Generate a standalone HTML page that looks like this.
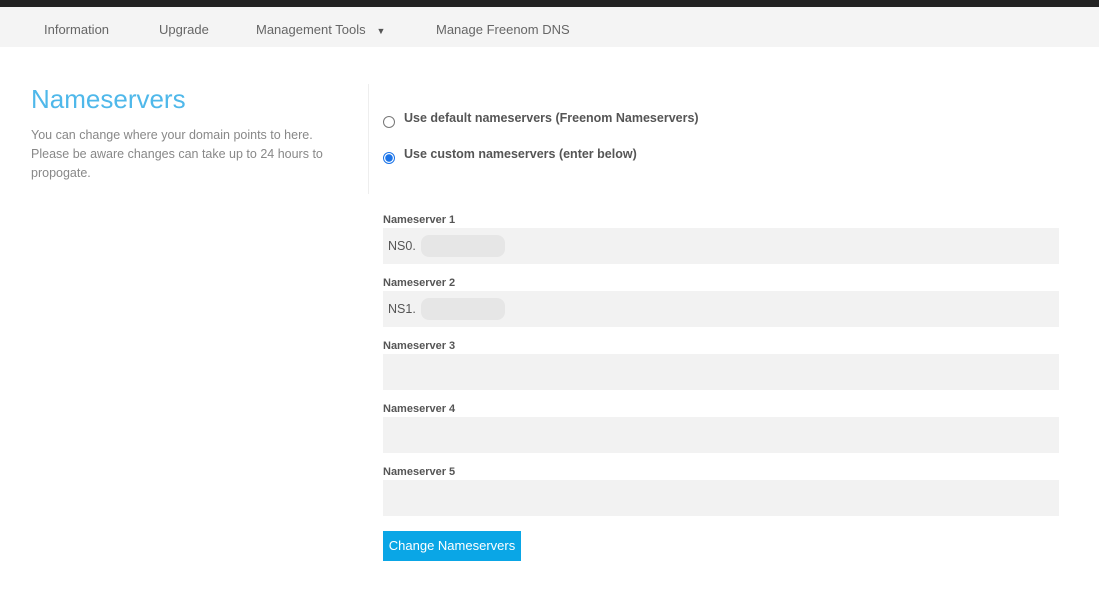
<!DOCTYPE html>
<html><head><meta charset="utf-8"><style>
body{margin:0;width:1099px;height:595px;background:#fff;font-family:"Liberation Sans",sans-serif;position:relative;overflow:hidden}
.top{position:absolute;left:0;top:0;width:1099px;height:7px;background:#222}
.nav{position:absolute;left:0;top:7px;width:1099px;height:40px;background:#f4f4f4}
.nav span{position:absolute;top:15px;font-size:13px;color:#666}
h1{position:absolute;left:31px;top:84px;margin:0;font-weight:300;font-size:26px;color:#4fb8ea}
.desc{position:absolute;left:31px;top:126px;font-size:12.5px;line-height:19px;color:#888;width:320px}
.vl{position:absolute;left:368px;top:84px;width:1px;height:110px;background:#eee}
.radio{position:absolute;left:383px;width:10px;height:10px;border:1px solid #777;border-radius:50%}
.rl{position:absolute;left:404px;font-size:12.5px;font-weight:bold;color:#555}
.lbl{position:absolute;left:383px;font-size:11px;font-weight:bold;color:#555}
.inp{position:absolute;left:383px;width:676px;height:36px;background:#f2f2f2;font-size:12.5px;color:#555}
.inp span{position:absolute;left:5px;top:11px}
.blur{position:absolute;left:38px;top:7px;width:84px;height:22px;background:#e6e6e6;border-radius:8px}
.btn{position:absolute;left:383px;top:531px;width:138px;height:30px;background:#0aa6e6;color:#fff;font-size:13px;line-height:30px;text-align:center}
</style></head><body>
<div class="top"></div>
<div class="nav"><span style="left:44px">Information</span><span style="left:159px">Upgrade</span><span style="left:256px">Management Tools &nbsp;&nbsp;<span style="position:static;font-size:9px;color:#555">▼</span></span><span style="left:436px">Manage Freenom DNS</span></div>
<h1>Nameservers</h1>
<div class="desc">You can change where your domain points to here. Please be aware changes can take up to 24 hours to propogate.</div>
<div class="vl"></div>
<div class="radio" style="top:116px"></div><div class="rl" style="top:111px">Use default nameservers (Freenom Nameservers)</div>
<div class="radio" style="top:152px;border-color:#1a73e8;background:radial-gradient(circle,#1a73e8 3.5px,#fff 4px)"></div><div class="rl" style="top:147px">Use custom nameservers (enter below)</div>
<div class="lbl" style="top:214px">Nameserver 1</div><div class="inp" style="top:228px"><span>NS0.</span><div class="blur"></div></div>
<div class="lbl" style="top:277px">Nameserver 2</div><div class="inp" style="top:291px"><span>NS1.</span><div class="blur"></div></div>
<div class="lbl" style="top:340px">Nameserver 3</div><div class="inp" style="top:354px"></div>
<div class="lbl" style="top:403px">Nameserver 4</div><div class="inp" style="top:417px"></div>
<div class="lbl" style="top:466px">Nameserver 5</div><div class="inp" style="top:480px"></div>
<div class="btn">Change Nameservers</div>
</body></html>
